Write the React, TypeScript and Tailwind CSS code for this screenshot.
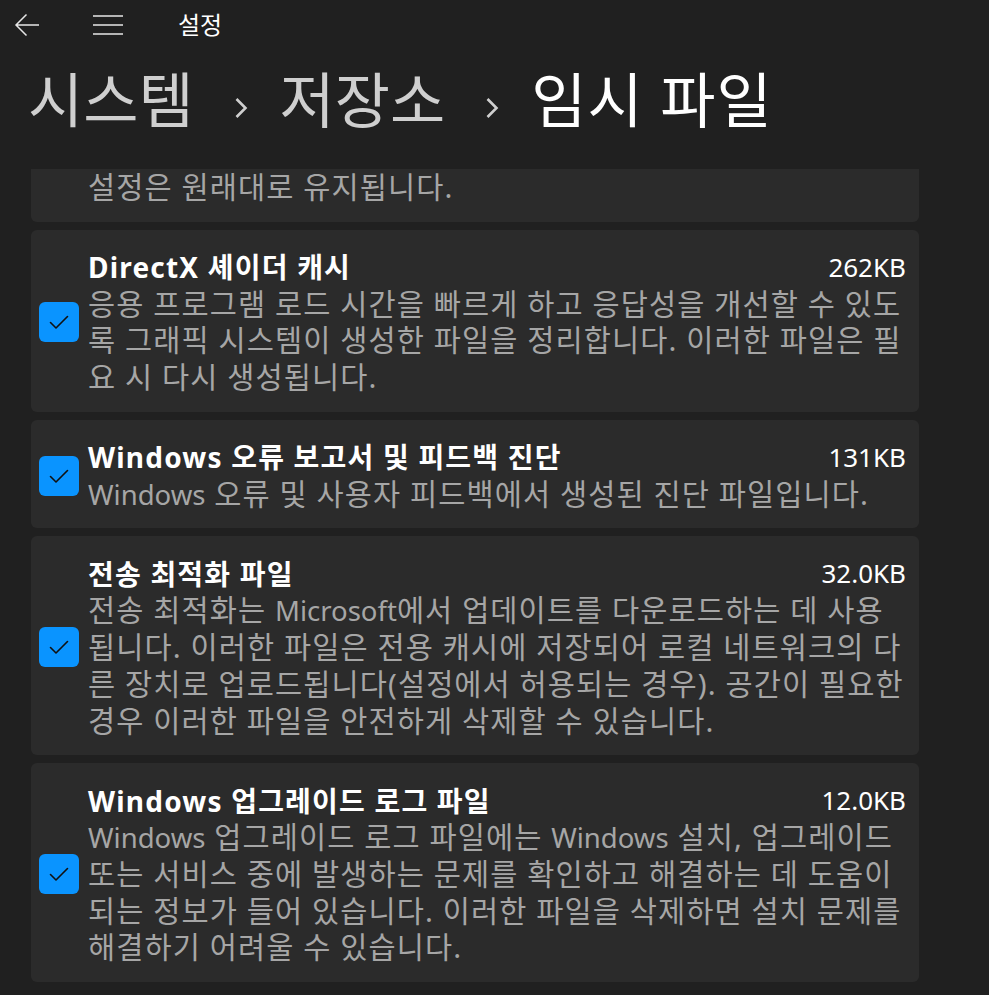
import React from 'react';

interface Item {
  title: string;
  size: string;
  lines: string[];
}

const items: Item[] = [
  {
    title: 'DirectX 셰이더 캐시',
    size: '262KB',
    lines: [
      '응용 프로그램 로드 시간을 빠르게 하고 응답성을 개선할 수 있도',
      '록 그래픽 시스템이 생성한 파일을 정리합니다. 이러한 파일은 필',
      '요 시 다시 생성됩니다.',
    ],
  },
  {
    title: 'Windows 오류 보고서 및 피드백 진단',
    size: '131KB',
    lines: ['Windows 오류 및 사용자 피드백에서 생성된 진단 파일입니다.'],
  },
  {
    title: '전송 최적화 파일',
    size: '32.0KB',
    lines: [
      '전송 최적화는 Microsoft에서 업데이트를 다운로드하는 데 사용',
      '됩니다. 이러한 파일은 전용 캐시에 저장되어 로컬 네트워크의 다',
      '른 장치로 업로드됩니다(설정에서 허용되는 경우). 공간이 필요한',
      '경우 이러한 파일을 안전하게 삭제할 수 있습니다.',
    ],
  },
  {
    title: 'Windows 업그레이드 로그 파일',
    size: '12.0KB',
    lines: [
      'Windows 업그레이드 로그 파일에는 Windows 설치, 업그레이드',
      '또는 서비스 중에 발생하는 문제를 확인하고 해결하는 데 도움이',
      '되는 정보가 들어 있습니다. 이러한 파일을 삭제하면 설치 문제를',
      '해결하기 어려울 수 있습니다.',
    ],
  },
];

// latin words are narrower in the original font, so drop the extra tracking there
const withLatin = (s: string) =>
  s.split(/([A-Za-z]+)/).map((part, i) =>
    /^[A-Za-z]+$/.test(part) ? (
      <span key={i} className="text-[27.5px] leading-none tracking-normal">
        {part}
      </span>
    ) : (
      <React.Fragment key={i}>{part}</React.Fragment>
    )
  );

const Chevron: React.FC = () => (
  <svg width="14" height="22" viewBox="0 0 14 22" className="ml-[40px] mr-[32px] mt-[16px]">
    <path d="M2.5 2 L11.5 11 L2.5 20" fill="none" stroke="#cfcfcf" strokeWidth="2.6" />
  </svg>
);

const Checkbox: React.FC = () => (
  <div className="w-10 h-10 rounded-md bg-[#0a94ff] flex items-center justify-center shrink-0">
    <svg width="26" height="26" viewBox="0 0 26 26">
      <path d="M4.5 13.5 L10 19 L21.5 7.5" fill="none" stroke="#111" strokeWidth="1.6" strokeLinecap="round" strokeLinejoin="round" />
    </svg>
  </div>
);

const Card: React.FC<{ item: Item }> = ({ item }) => (
  <div className="mt-2 w-[888px] rounded-md bg-[#2b2b2b] pl-2 pr-[13px] pt-[19px] pb-4 flex items-center gap-[9px]">
    <Checkbox />
    <div className="flex-1 min-w-0">
      <div className="flex justify-between items-center h-[37px]">
        <span className="text-[28px] tracking-[1.2px] font-bold text-white">{item.title}</span>
        <span className="text-[26px] text-white">{item.size}</span>
      </div>
      {item.lines.map((l, i) => (
        <div key={i} className="block h-[36.7px] whitespace-nowrap text-[29.5px] tracking-[1.1px] leading-[36.7px] text-[#a6a6a6]">
          {withLatin(l)}
        </div>
      ))}
    </div>
  </div>
);

export default function App() {
  return (
    <div
      className="w-[989px] h-[995px] overflow-hidden bg-[#202020] text-white"
      style={{ fontFamily: '"Noto Sans", "Noto Sans CJK KR", sans-serif' }}
    >
      <div className="h-[50px] flex items-center">
        <svg width="26" height="24" viewBox="0 0 26 24" className="ml-[14px]">
          <path d="M25 12 H2 M12.5 1.5 L2 12 L12.5 22.5" fill="none" stroke="#e6e6e6" strokeWidth="1.5" />
        </svg>
        <svg width="32" height="22" viewBox="0 0 32 22" className="ml-[52px]">
          <path d="M1 2 H31 M1 11 H31 M1 20 H31" fill="none" stroke="#e6e6e6" strokeWidth="1.6" />
        </svg>
        <span className="ml-[54px] text-[24px] text-white">설정</span>
      </div>
      <div className="h-[120px] flex items-center pl-[28px] pb-[20px]">
        <span className="text-[60px] leading-[70px] text-[#cfcfcf]">시스템</span>
        <Chevron />
        <span className="text-[60px] leading-[70px] text-[#cfcfcf]">저장소</span>
        <Chevron />
        <span className="text-[60px] leading-[70px] tracking-[1px] text-white">임시 파일</span>
      </div>
      <div className="ml-[31px]">
        <div className="w-[888px] rounded-b-md bg-[#2b2b2b] pl-[57px] pb-4">
          <div className="text-[29.5px] tracking-[1.1px] leading-[36.7px] text-[#a6a6a6] -mt-px">설정은 원래대로 유지됩니다.</div>
        </div>
        {items.map((it, i) => (
          <Card key={i} item={it} />
        ))}
      </div>
    </div>
  );
}
